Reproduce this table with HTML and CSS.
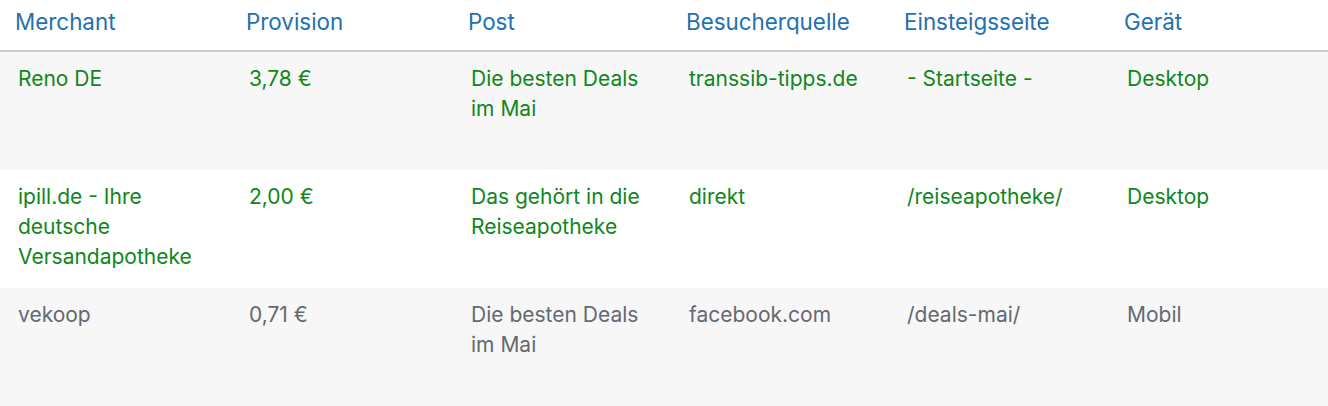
FILE: index.html
```html
<!DOCTYPE html>
<html lang="de">
<head>
<meta charset="utf-8">
<title>Klicks</title>
<link rel="stylesheet" href="styles.css">
</head>
<body>
<table class="list">
  <colgroup>
    <col class="c1"><col class="c2"><col class="c3"><col class="c4"><col class="c5"><col class="c6">
  </colgroup>
  <thead>
    <tr>
      <th>Merchant</th>
      <th>Provision</th>
      <th>Post</th>
      <th>Besucherquelle</th>
      <th>Einsteigsseite</th>
      <th>Gerät</th>
    </tr>
  </thead>
  <tbody>
    <tr class="row alt ok">
      <td>Reno DE</td>
      <td>3,78 €</td>
      <td>Die besten Deals im Mai</td>
      <td>transsib-tipps.de</td>
      <td>- Startseite -</td>
      <td>Desktop</td>
    </tr>
    <tr class="row ok">
      <td>ipill.de - Ihre deutsche Versandapotheke</td>
      <td>2,00 €</td>
      <td>Das gehört in die Reiseapotheke</td>
      <td>direkt</td>
      <td>/reiseapotheke/</td>
      <td>Desktop</td>
    </tr>
    <tr class="row alt">
      <td>vekoop</td>
      <td>0,71 €</td>
      <td>Die besten Deals im Mai</td>
      <td>facebook.com</td>
      <td>/deals-mai/</td>
      <td>Mobil</td>
    </tr>
  </tbody>
</table>
</body>
</html>
```
FILE: styles.css
```css
html, body {
  margin: 0;
  padding: 0;
  background: #ffffff;
}
body {
  font-family: Inter, "Noto Sans", "Liberation Sans", sans-serif;
  overflow: hidden;
}
.list {
  width: 1328px;
  table-layout: fixed;
  border-collapse: separate;
  border-spacing: 0;
}
.c1 { width: 231px; }
.c2 { width: 222px; }
.c3 { width: 218px; }
.c4 { width: 218px; }
.c5 { width: 220px; }
.c6 { width: 219px; }
.list th {
  text-align: left;
  font-weight: 400;
  font-size: 22.4px;
  line-height: 30px;
  color: #2271b1;
  padding: 7px 15px 13px 15px;
  border-bottom: 2px solid #c9cbcf;
  white-space: nowrap;
}
.list td {
  vertical-align: top;
  font-size: 21px;
  line-height: 30px;
  color: #646970;
  padding: 11.5px 18px 0 18px;
}
.row {
  height: 118px;
}
.row.alt {
  background: #f7f7f7;
}
.row.ok td {
  color: #10861b;
}
```
